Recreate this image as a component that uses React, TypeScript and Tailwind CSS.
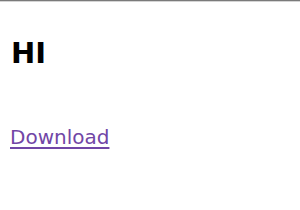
export default function App() {
  return (
    <div className="w-[300px] h-[210px] bg-white overflow-hidden font-['DejaVu_Sans',sans-serif]">
      <div className="h-px bg-[#7a7a7a]" />
      <div className="h-px bg-[#d4d4d4]" />
      <div className="px-[10px]">
        <h1 className="mt-[35px] ml-[1px] text-[29px] leading-[32px] font-bold text-black">HI</h1>
        <a
          href="#download"
          className="inline-block mt-[56px] text-[20px] leading-[24px] text-[#7146a6] underline decoration-[1.5px] underline-offset-[3px]"
        >
          Download
        </a>
      </div>
    </div>
  );
}
